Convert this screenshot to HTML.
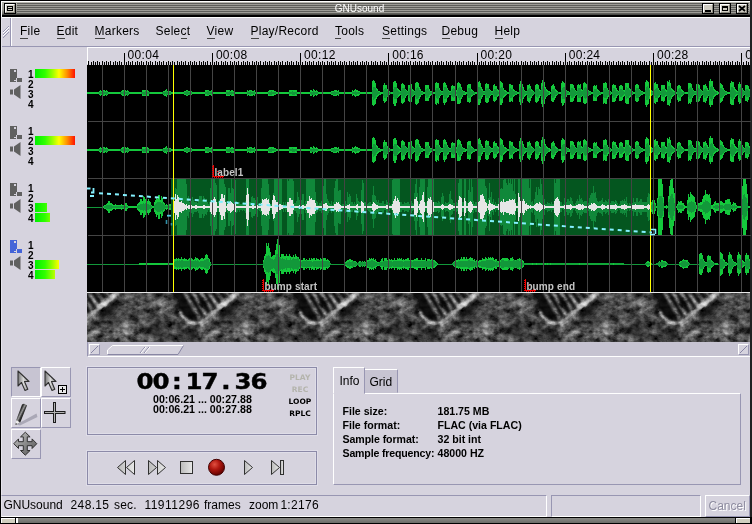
<!DOCTYPE html>
<html><head><meta charset="utf-8"><title>GNUsound</title>
<style>
html,body{margin:0;padding:0}
body{width:752px;height:524px;position:relative;overflow:hidden;background:#d6d3de;font-family:"Liberation Sans",sans-serif;font-size:12px;color:#000}
div,span,svg{position:absolute;box-sizing:border-box}
.t{white-space:pre;line-height:1}
.m{top:24px;font-size:12px;white-space:pre;line-height:14px;height:14px;letter-spacing:.25px}
.m u{text-decoration:none;border-bottom:1px solid #444;padding-bottom:0px}
.b{font-weight:bold;font-size:10px;line-height:10px;white-space:pre}
.etch{border:1px solid #8c8aa8;box-shadow:0 0 0 1px #dfdde8, inset 0 0 0 1px #dfdde8}
.btn{border:1px solid;border-color:#fff #9896b2 #9896b2 #fff;background:#d6d3de}
.btn.on{border-color:#9896b2 #fff #fff #9896b2;background:#c7c4d2}
.in{border:1px solid;border-color:#9896b2 #fff #fff #9896b2}
.lbl{font-weight:bold;font-size:10px;line-height:10px;color:#c4c4c4;white-space:pre}
.num{font-weight:bold;font-size:10px;line-height:10px;left:28px}
</style></head><body>

<div style="left:0;top:0;width:752px;height:17px;background:#000"></div>
<div style="left:1px;top:1px;width:749px;height:1px;background:#fff"></div>
<div style="left:1px;top:2px;width:1px;height:15px;background:#fff"></div>
<div style="left:1px;top:17px;width:1px;height:500px;background:#e6e4ec"></div>
<div style="left:0;top:0;width:1px;height:524px;background:#000"></div>
<div style="left:750px;top:0;width:2px;height:524px;background:#222"></div>
<div style="left:2px;top:2px;width:748px;height:13px;background:linear-gradient(#b9b8b0,#a09f98 60%,#5a5a56)"></div>
<div style="left:17px;top:3px;width:732px;height:11px;background:repeating-linear-gradient(#5e5e5a 0,#5e5e5a 1px,#9d9c96 1px,#9d9c96 2px)"></div>
<div style="left:2px;top:14px;width:748px;height:1px;background:#4a4a46"></div>
<div class="t" style="left:0;top:4px;width:719px;text-align:center;font-size:10px;line-height:10px;color:#fff">GNUsound</div>
<div style="left:4px;top:3px;width:12px;height:11px;background:#000"></div>
<div style="left:5px;top:4px;width:10px;height:9px;background:#d0cdc2;border:1px solid;border-color:#fff #8a887e #8a887e #fff"></div>
<div style="left:7px;top:6px;width:6px;height:5px;border:1px solid #000;background:#d0cdc2"></div><div style="left:8px;top:8px;width:4px;height:1px;background:#000"></div>
<div style="left:702px;top:3px;width:12px;height:11px;background:#000"></div>
<div style="left:703px;top:4px;width:10px;height:9px;background:#d0cdc2;border:1px solid;border-color:#fff #8a887e #8a887e #fff"></div>
<div style="left:705px;top:10px;width:6px;height:2px;background:#000"></div>
<div style="left:719px;top:3px;width:12px;height:11px;background:#000"></div>
<div style="left:720px;top:4px;width:10px;height:9px;background:#d0cdc2;border:1px solid;border-color:#fff #8a887e #8a887e #fff"></div>
<div style="left:722px;top:6px;width:6px;height:5px;border:1px solid #000;border-top-width:2px"></div>
<div style="left:736px;top:3px;width:12px;height:11px;background:#000"></div>
<div style="left:737px;top:4px;width:10px;height:9px;background:#d0cdc2;border:1px solid;border-color:#fff #8a887e #8a887e #fff"></div>
<svg style="left:738px;top:5px" width="8" height="7" viewBox="0 0 8 7"><path d="M1 1L7 6M7 1L1 6" stroke="#000" stroke-width="1.8" fill="none"/></svg>
<div style="left:2px;top:17px;width:748px;height:30px;background:#d6d3de"></div>
<div style="left:2px;top:17px;width:748px;height:1px;background:#fff"></div>
<div style="left:2px;top:46px;width:748px;height:1px;background:#9896b2"></div>
<div style="left:10px;top:18px;width:1px;height:28px;background:#9896b2"></div>
<div style="left:11px;top:18px;width:1px;height:28px;background:#fff"></div>
<svg style="left:3px;top:26px" width="7" height="12" viewBox="0 0 7 12"><path d="M0 6L6 0M0 9L6 3M0 12L6 6" stroke="#9896b2" stroke-width="1" fill="none"/><path d="M0 7L6 1M0 10L6 4" stroke="#fff" stroke-width="1" fill="none"/></svg>
<span class="m" style="left:20px"><u>F</u>ile</span>
<span class="m" style="left:56.5px"><u>E</u>dit</span>
<span class="m" style="left:94.5px"><u>M</u>arkers</span>
<span class="m" style="left:155.5px">Sele<u>c</u>t</span>
<span class="m" style="left:206.5px"><u>V</u>iew</span>
<span class="m" style="left:250.5px"><u>P</u>lay/Record</span>
<span class="m" style="left:335px"><u>T</u>ools</span>
<span class="m" style="left:382px"><u>S</u>ettings</span>
<span class="m" style="left:441.5px"><u>D</u>ebug</span>
<span class="m" style="left:494.5px"><u>H</u>elp</span>
<div style="left:87px;top:47px;width:663px;height:1px;background:#fff"></div>
<div style="left:87px;top:47px;width:1px;height:17px;background:#fff"></div>
<svg style="left:0;top:47px" width="752" height="18" viewBox="0 47 752 18" shape-rendering="crispEdges"><path d="M88 61v4M91 62v3M93 61v4M95 62v3M97 61v4M99 62v3M102 61v4M104 62v3M106 61v4M108 62v3M110 61v4M113 62v3M115 61v4M117 62v3M119 61v4M121 62v3M124 61v4M126 62v3M128 61v4M130 62v3M132 61v4M135 62v3M137 61v4M139 62v3M141 61v4M143 62v3M146 61v4M148 62v3M150 61v4M152 62v3M155 61v4M157 62v3M159 61v4M161 62v3M163 61v4M166 62v3M168 61v4M170 62v3M172 61v4M174 62v3M177 61v4M179 62v3M181 61v4M183 62v3M185 61v4M188 62v3M190 61v4M192 62v3M194 61v4M196 62v3M199 61v4M201 62v3M203 61v4M205 62v3M207 61v4M210 62v3M212 61v4M214 62v3M216 61v4M218 62v3M221 61v4M223 62v3M225 61v4M227 62v3M230 61v4M232 62v3M234 61v4M236 62v3M238 61v4M241 62v3M243 61v4M245 62v3M247 61v4M249 62v3M252 61v4M254 62v3M256 61v4M258 62v3M260 61v4M263 62v3M265 61v4M267 62v3M269 61v4M271 62v3M274 61v4M276 62v3M278 61v4M280 62v3M282 61v4M285 62v3M287 61v4M289 62v3M291 61v4M293 62v3M296 61v4M298 62v3M300 61v4M302 62v3M305 61v4M307 62v3M309 61v4M311 62v3M313 61v4M316 62v3M318 61v4M320 62v3M322 61v4M324 62v3M327 61v4M329 62v3M331 61v4M333 62v3M335 61v4M338 62v3M340 61v4M342 62v3M344 61v4M346 62v3M349 61v4M351 62v3M353 61v4M355 62v3M357 61v4M360 62v3M362 61v4M364 62v3M366 61v4M368 62v3M371 61v4M373 62v3M375 61v4M377 62v3M380 61v4M382 62v3M384 61v4M386 62v3M388 61v4M391 62v3M393 61v4M395 62v3M397 61v4M399 62v3M402 61v4M404 62v3M406 61v4M408 62v3M410 61v4M413 62v3M415 61v4M417 62v3M419 61v4M421 62v3M424 61v4M426 62v3M428 61v4M430 62v3M432 61v4M435 62v3M437 61v4M439 62v3M441 61v4M443 62v3M446 61v4M448 62v3M450 61v4M452 62v3M455 61v4M457 62v3M459 61v4M461 62v3M463 61v4M466 62v3M468 61v4M470 62v3M472 61v4M474 62v3M477 61v4M479 62v3M481 61v4M483 62v3M485 61v4M488 62v3M490 61v4M492 62v3M494 61v4M496 62v3M499 61v4M501 62v3M503 61v4M505 62v3M507 61v4M510 62v3M512 61v4M514 62v3M516 61v4M518 62v3M521 61v4M523 62v3M525 61v4M527 62v3M530 61v4M532 62v3M534 61v4M536 62v3M538 61v4M541 62v3M543 61v4M545 62v3M547 61v4M549 62v3M552 61v4M554 62v3M556 61v4M558 62v3M560 61v4M563 62v3M565 61v4M567 62v3M569 61v4M571 62v3M574 61v4M576 62v3M578 61v4M580 62v3M582 61v4M585 62v3M587 61v4M589 62v3M591 61v4M593 62v3M596 61v4M598 62v3M600 61v4M602 62v3M605 61v4M607 62v3M609 61v4M611 62v3M613 61v4M616 62v3M618 61v4M620 62v3M622 61v4M624 62v3M627 61v4M629 62v3M631 61v4M633 62v3M635 61v4M638 62v3M640 61v4M642 62v3M644 61v4M646 62v3M649 61v4M651 62v3M653 61v4M655 62v3M657 61v4M660 62v3M662 61v4M664 62v3M666 61v4M668 62v3M671 61v4M673 62v3M675 61v4M677 62v3M680 61v4M682 62v3M684 61v4M686 62v3M688 61v4M691 62v3M693 61v4M695 62v3M697 61v4M699 62v3M702 61v4M704 62v3M706 61v4M708 62v3M710 61v4M713 62v3M715 61v4M717 62v3M719 61v4M721 62v3M724 61v4M726 62v3M728 61v4M730 62v3M732 61v4M735 62v3M737 61v4M739 62v3M741 61v4M743 62v3M746 61v4M748 62v3" stroke="#000" stroke-width="1" fill="none" transform="translate(.5 0)"/><path d="M124 53v12M212 53v12M300 53v12M388 53v12M477 53v12M565 53v12M653 53v12M741 53v12" stroke="#000" stroke-width="1" fill="none" transform="translate(.5 0)"/></svg>
<span class="t" style="left:127.6px;top:49px;font-size:12px;line-height:12px;letter-spacing:.3px;width:40px;overflow:hidden">00:04</span>
<span class="t" style="left:215.9px;top:49px;font-size:12px;line-height:12px;letter-spacing:.3px;width:40px;overflow:hidden">00:08</span>
<span class="t" style="left:304.1px;top:49px;font-size:12px;line-height:12px;letter-spacing:.3px;width:40px;overflow:hidden">00:12</span>
<span class="t" style="left:392.3px;top:49px;font-size:12px;line-height:12px;letter-spacing:.3px;width:40px;overflow:hidden">00:16</span>
<span class="t" style="left:480.6px;top:49px;font-size:12px;line-height:12px;letter-spacing:.3px;width:40px;overflow:hidden">00:20</span>
<span class="t" style="left:568.8px;top:49px;font-size:12px;line-height:12px;letter-spacing:.3px;width:40px;overflow:hidden">00:24</span>
<span class="t" style="left:657.0px;top:49px;font-size:12px;line-height:12px;letter-spacing:.3px;width:40px;overflow:hidden">00:28</span>
<span class="t" style="left:745.3px;top:49px;font-size:12px;line-height:12px;letter-spacing:.3px;width:5px;overflow:hidden">00:32</span>
<svg style="left:0;top:65px" width="752" height="229" viewBox="0 65 752 229" shape-rendering="crispEdges"><rect x="87" y="65" width="663" height="228" fill="#000"/><rect x="171" y="179" width="480" height="56" fill="#04561f"/><rect x="87" y="92" width="663" height="2" fill="#14c83c"/><path d="M99 91V95M100 90V96M101 91V95M102 90V96M103 90V96M104 90V96M105 91V95M106 90V96M107 91V95M120 92V94M121 91V95M122 90V96M123 90V96M124 90V96M125 90V96M126 91V95M127 90V96M128 91V95M141 92V94M142 90V96M143 90V96M144 90V96M145 90V96M146 90V96M147 90V96M148 91V96M149 92V94M162 92V94M163 91V95M164 91V96M165 90V96M166 89V97M167 91V95M168 90V96M169 91V95M170 91V95M183 92V94M184 91V95M185 91V95M186 90V96M187 90V96M188 91V95M189 91V95M190 90V96M191 91V95M204 92V94M205 90V96M206 90V96M207 90V96M208 90V96M209 91V95M210 91V95M211 90V96M212 91V95M225 92V94M226 90V96M227 90V96M228 90V96M229 90V96M230 91V95M231 90V96M232 90V96M233 91V96M246 93V93M247 90V96M248 91V95M249 90V96M250 90V96M251 90V96M252 91V96M253 91V95M254 90V96M268 91V96M269 90V96M270 90V96M271 90V96M272 90V96M273 90V96M274 91V95M275 91V95M289 90V96M290 90V96M291 90V96M292 90V96M293 90V96M294 90V96M295 90V96M296 90V96M310 90V96M311 90V96M312 91V95M313 89V97M314 90V96M315 91V95M316 90V96M317 91V95M331 91V95M332 91V95M333 91V96M334 90V96M335 90V96M336 90V96M337 91V95M338 90V96M352 90V96M353 91V95M354 90V96M355 89V97M356 90V96M357 90V96M358 91V96M359 91V95M372 81V105M373 80V106M374 81V105M375 83V104M376 88V99M377 89V97M378 91V96M379 91V95M380 92V95M381 92V94M382 92V94M383 85V101M384 83V103M385 85V102M386 85V101M387 89V97M388 90V96M389 91V95M390 92V94M391 92V94M392 92V94M393 82V104M394 81V106M395 81V106M396 83V103M397 88V98M398 89V97M399 90V96M400 91V95M401 84V103M402 83V104M403 84V103M404 85V102M405 89V98M406 90V96M407 91V95M408 85V101M409 85V102M410 85V101M411 84V102M412 89V97M413 90V96M414 91V95M415 83V104M416 82V105M417 82V104M418 83V103M419 87V99M420 89V97M421 91V95M422 91V95M423 92V94M424 92V94M425 85V101M426 85V101M427 85V101M428 85V101M429 89V98M430 91V96M431 91V95M432 92V94M433 92V94M434 92V94M435 83V104M436 82V105M437 83V103M438 83V104M439 88V98M440 90V96M441 91V95M442 91V95M443 83V103M444 82V105M445 83V103M446 85V102M447 88V98M448 90V97M449 91V95M450 91V95M451 86V101M452 85V101M453 86V101M454 86V101M455 89V97M456 90V96M457 83V104M458 82V104M459 83V104M460 84V103M461 87V99M462 90V97M463 91V95M464 91V95M465 92V95M466 92V94M467 85V102M468 84V102M469 84V103M470 84V102M471 89V97M472 90V96M473 91V95M474 92V95M475 92V94M476 92V94M477 83V104M478 82V105M479 81V105M480 83V103M481 87V99M482 89V97M483 91V95M484 91V95M485 84V102M486 83V103M487 84V103M488 84V102M489 89V98M490 90V96M491 91V95M492 91V95M493 85V101M494 84V102M495 86V101M496 86V100M497 89V97M498 90V96M499 84V103M500 81V105M501 82V105M502 83V103M503 88V98M504 90V97M505 90V96M506 91V95M507 92V94M508 92V94M509 84V102M510 84V102M511 85V101M512 85V102M513 89V97M514 90V96M515 91V95M516 91V95M517 92V94M518 92V94M519 84V102M520 81V105M521 82V105M522 84V103M523 87V99M524 90V97M525 91V96M526 91V95M527 85V101M528 85V102M529 84V103M530 86V101M531 89V98M532 90V96M533 91V95M534 92V94M535 85V102M536 84V103M537 84V102M538 85V101M539 89V98M540 90V96M541 83V104M542 80V107M543 80V107M544 82V104M545 87V99M546 89V97M547 90V96M548 91V95M549 91V95M550 92V94M551 86V101M552 85V102M553 84V102M554 86V100M555 89V98M556 90V96M557 91V95M558 92V94M559 92V94M560 92V94M561 83V103M562 81V106M563 82V105M564 83V103M565 87V99M566 90V97M567 91V95M568 91V95M569 92V95M570 84V102M571 84V102M572 84V102M573 85V101M574 88V98M575 90V96M576 91V95M577 85V102M578 84V102M579 85V102M580 84V102M581 89V97M582 90V96M583 83V103M584 82V104M585 83V104M586 84V103M587 88V98M588 90V96M589 91V95M590 91V95M591 92V94M592 92V94M593 86V101M594 85V101M595 86V101M596 85V101M597 89V97M598 90V96M599 91V95M600 92V95M601 92V94M602 92V94M603 83V104M604 83V103M605 82V104M606 83V104M607 88V99M608 90V97M609 91V95M610 91V95M611 92V94M612 85V102M613 84V102M614 85V102M615 85V101M616 88V98M617 90V96M618 91V95M619 86V101M620 85V101M621 85V101M622 86V100M623 90V97M624 90V96M625 83V103M626 83V104M627 83V104M628 83V104M629 88V98M630 89V97M631 90V96M632 91V95M633 92V94M634 92V94M635 85V101M636 84V102M637 84V102M638 85V101M639 89V97M640 90V96M641 91V95M642 91V95M643 92V94M644 92V94M645 82V105M646 80V107M647 81V105M648 82V104M649 88V99M650 89V97M651 90V96M652 91V95M653 92V94M654 83V103M655 82V104M656 84V102M657 84V102M658 88V98M659 90V97M660 91V95M661 85V101M662 85V101M663 85V102M664 85V101M665 89V97M666 90V96M667 81V105M668 82V105M669 80V106M670 83V103M671 88V99M672 89V97M673 90V96M674 91V95M675 92V94M676 92V94M677 86V100M678 85V102M679 85V101M680 86V101M681 89V97M682 90V96M683 91V95M684 92V94M685 92V94M686 92V94M687 92V94M688 83V104M689 83V103M690 83V104M691 84V102M692 88V98M693 90V96M694 91V95M695 91V95M696 84V102M697 83V103M698 84V102M699 85V101M700 89V98M701 90V96M702 91V95M703 85V102M704 85V102M705 84V103M706 86V101M707 88V98M708 90V96M709 81V105M710 79V107M711 81V105M712 81V105M713 87V99M714 89V97M715 90V96M716 91V95M717 91V95M718 92V94M719 85V102M720 83V103M721 84V102M722 85V101M723 88V98M724 90V96M725 91V95M726 91V95M727 92V94M728 92V94M729 92V94M730 83V104M731 81V105M732 82V105M733 82V105M734 87V99M735 89V97M736 90V96M737 91V95M738 84V102M739 82V104M740 84V103M741 85V102M742 88V98M743 90V96M744 91V95M745 85V101M746 85V101M747 85V102M748 86V100M749 89V97" stroke="#14c83c" stroke-width="1" fill="none" transform="translate(.5 0)"/><path d="M99 92V94M100 92V94M101 92V94M102 92V95M103 91V95M104 92V94M105 92V94M106 92V95M107 92V94M120 92V94M121 92V94M122 92V94M123 91V95M124 91V95M125 92V94M126 92V94M127 92V95M128 92V94M141 92V94M142 92V94M143 92V95M144 92V95M145 91V95M146 92V95M147 92V94M148 92V94M149 92V94M162 92V94M163 92V94M164 92V95M165 92V94M166 91V95M167 92V94M168 92V94M169 92V94M170 92V94M183 93V93M184 92V94M185 92V94M186 91V95M187 91V95M188 92V94M189 92V95M190 92V94M191 92V94M204 93V93M205 92V94M206 92V94M207 91V95M208 91V95M209 92V94M210 92V94M211 92V94M212 92V94M226 92V94M227 92V95M228 92V95M229 91V95M230 92V94M231 92V95M232 92V94M233 92V94M247 92V94M248 92V94M249 92V94M250 91V95M251 92V94M252 92V94M253 92V94M254 92V94M268 92V94M269 92V95M270 92V95M271 91V95M272 92V94M273 92V94M274 92V94M275 92V94M289 92V94M290 92V94M291 92V94M292 91V95M293 92V95M294 92V95M295 92V94M296 92V95M310 92V94M311 92V95M312 92V95M313 91V95M314 92V95M315 92V94M316 92V94M317 92V94M331 92V94M332 92V94M333 92V95M334 91V95M335 92V95M336 92V94M337 92V94M338 92V94M352 92V94M353 92V94M354 92V94M355 91V95M356 92V95M357 92V94M358 92V94M359 92V94M372 90V97M373 87V100M374 87V99M375 88V98M376 90V96M377 91V95M378 92V94M379 92V94M383 90V96M384 89V98M385 88V98M386 89V97M387 91V96M388 91V95M389 92V94M390 92V94M393 89V97M394 87V99M395 87V99M396 87V99M397 90V97M398 91V95M399 92V94M400 92V94M401 90V96M402 88V99M403 88V98M404 88V98M405 90V96M406 91V95M407 92V94M408 91V96M409 88V98M410 88V98M411 89V97M412 91V96M413 91V95M414 92V94M415 90V97M416 88V99M417 87V99M418 88V98M419 90V96M420 91V95M421 92V94M422 92V94M425 90V96M426 89V98M427 88V98M428 89V97M429 91V95M430 92V94M431 92V94M432 92V94M435 90V96M436 88V98M437 88V99M438 88V98M439 90V96M440 91V95M441 92V94M442 92V94M443 90V96M444 87V99M445 87V99M446 88V98M447 90V96M448 91V95M449 92V94M450 92V94M451 91V96M452 89V97M453 88V98M454 89V97M455 90V96M456 92V94M457 90V96M458 88V98M459 87V100M460 88V98M461 90V97M462 91V95M463 92V94M464 92V94M467 91V96M468 88V98M469 88V98M470 89V97M471 91V95M472 91V95M473 92V94M474 92V94M477 90V96M478 87V99M479 87V99M480 88V99M481 90V96M482 91V95M483 92V94M484 92V94M485 90V96M486 88V98M487 88V98M488 88V98M489 90V96M490 91V95M491 92V94M492 92V94M493 91V95M494 89V97M495 89V97M496 89V97M497 91V95M498 92V94M499 89V97M500 88V98M501 87V99M502 88V98M503 90V96M504 91V95M505 92V94M506 92V94M509 91V96M510 88V98M511 89V98M512 89V97M513 91V95M514 91V95M515 92V94M516 92V94M519 90V97M520 87V99M521 88V98M522 88V98M523 90V97M524 91V95M525 92V94M526 92V94M527 90V96M528 89V98M529 88V98M530 89V97M531 91V96M532 91V95M533 92V94M534 92V94M535 90V96M536 89V97M537 89V98M538 89V97M539 91V95M540 91V95M541 89V97M542 86V100M543 87V99M544 88V99M545 89V97M546 91V96M547 92V95M548 92V94M551 91V96M552 89V98M553 89V98M554 89V97M555 91V95M556 92V95M557 92V94M558 92V94M561 90V96M562 88V99M563 87V99M564 87V99M565 90V96M566 91V95M567 92V94M568 92V94M570 90V96M571 88V98M572 88V98M573 89V97M574 90V96M575 91V95M576 92V94M577 90V96M578 88V98M579 88V98M580 88V98M581 91V96M582 91V95M583 90V96M584 88V98M585 87V99M586 88V98M587 90V96M588 91V95M589 92V94M590 92V94M593 91V96M594 89V97M595 89V98M596 89V97M597 91V95M598 91V95M599 92V94M600 92V94M603 90V97M604 88V98M605 88V98M606 88V98M607 90V96M608 91V95M609 92V94M610 92V94M612 91V96M613 88V98M614 88V98M615 89V97M616 91V95M617 91V95M618 92V94M619 91V95M620 89V97M621 89V97M622 90V96M623 91V95M624 92V94M625 90V96M626 87V99M627 88V98M628 88V98M629 90V96M630 91V95M631 92V94M632 92V94M635 90V96M636 88V98M637 88V98M638 88V98M639 90V96M640 91V95M641 92V94M642 92V94M645 90V96M646 87V100M647 86V100M648 88V99M649 90V96M650 91V95M651 92V94M652 92V94M654 90V96M655 89V98M656 88V98M657 88V98M658 90V96M659 91V95M660 92V94M661 90V96M662 89V97M663 89V97M664 89V97M665 91V95M666 92V95M667 89V97M668 86V100M669 86V100M670 88V99M671 90V96M672 91V95M673 92V95M674 92V94M677 91V95M678 89V97M679 88V98M680 89V97M681 91V95M682 92V95M683 92V94M684 92V94M688 89V97M689 88V99M690 87V99M691 88V98M692 90V96M693 91V95M694 92V94M695 92V94M696 90V96M697 88V99M698 88V99M699 89V97M700 90V96M701 91V95M702 92V94M703 90V96M704 89V98M705 88V98M706 89V97M707 91V96M708 91V95M709 90V97M710 87V99M711 86V101M712 87V99M713 90V96M714 91V95M715 92V94M716 92V94M719 90V96M720 88V98M721 88V98M722 89V97M723 90V96M724 91V95M725 92V94M726 92V94M730 90V97M731 87V99M732 87V100M733 88V98M734 90V97M735 91V95M736 92V94M737 92V94M738 90V96M739 88V98M740 87V99M741 88V98M742 90V96M743 91V95M744 92V94M745 90V96M746 89V97M747 89V97M748 90V97M749 91V96" stroke="#12983a" stroke-width="1" fill="none" transform="translate(.5 0)"/><rect x="87" y="149" width="663" height="2" fill="#14c83c"/><path d="M99 148V152M100 147V153M101 148V152M102 147V153M103 147V153M104 147V153M105 148V152M106 147V153M107 148V152M120 149V151M121 148V152M122 147V153M123 147V153M124 147V153M125 147V153M126 148V152M127 147V153M128 148V152M141 149V151M142 147V153M143 147V153M144 147V153M145 147V153M146 147V153M147 147V153M148 148V153M149 149V151M162 149V151M163 148V152M164 148V153M165 147V153M166 146V154M167 148V152M168 147V153M169 148V152M170 148V152M183 149V151M184 148V152M185 148V152M186 147V153M187 147V153M188 148V152M189 148V152M190 147V153M191 148V152M204 149V151M205 147V153M206 147V153M207 147V153M208 147V153M209 148V152M210 148V152M211 147V153M212 148V152M225 149V151M226 147V153M227 147V153M228 147V153M229 147V153M230 148V152M231 147V153M232 147V153M233 148V153M246 150V150M247 147V153M248 148V152M249 147V153M250 147V153M251 147V153M252 148V153M253 148V152M254 147V153M268 148V153M269 147V153M270 147V153M271 147V153M272 147V153M273 147V153M274 148V152M275 148V152M289 147V153M290 147V153M291 147V153M292 147V153M293 147V153M294 147V153M295 147V153M296 147V153M310 147V153M311 147V153M312 148V152M313 146V154M314 147V153M315 148V152M316 147V153M317 148V152M331 148V152M332 148V152M333 148V153M334 147V153M335 147V153M336 147V153M337 148V152M338 147V153M352 147V153M353 148V152M354 147V153M355 146V154M356 147V153M357 147V153M358 148V153M359 148V152M372 138V162M373 137V163M374 138V162M375 140V161M376 145V156M377 146V154M378 148V153M379 148V152M380 149V152M381 149V151M382 149V151M383 142V158M384 140V160M385 142V159M386 142V158M387 146V154M388 147V153M389 148V152M390 149V151M391 149V151M392 149V151M393 139V161M394 138V163M395 138V163M396 140V160M397 145V155M398 146V154M399 147V153M400 148V152M401 141V160M402 140V161M403 141V160M404 142V159M405 146V155M406 147V153M407 148V152M408 142V158M409 142V159M410 142V158M411 141V159M412 146V154M413 147V153M414 148V152M415 140V161M416 139V162M417 139V161M418 140V160M419 144V156M420 146V154M421 148V152M422 148V152M423 149V151M424 149V151M425 142V158M426 142V158M427 142V158M428 142V158M429 146V155M430 148V153M431 148V152M432 149V151M433 149V151M434 149V151M435 140V161M436 139V162M437 140V160M438 140V161M439 145V155M440 147V153M441 148V152M442 148V152M443 140V160M444 139V162M445 140V160M446 142V159M447 145V155M448 147V154M449 148V152M450 148V152M451 143V158M452 142V158M453 143V158M454 143V158M455 146V154M456 147V153M457 140V161M458 139V161M459 140V161M460 141V160M461 144V156M462 147V154M463 148V152M464 148V152M465 149V152M466 149V151M467 142V159M468 141V159M469 141V160M470 141V159M471 146V154M472 147V153M473 148V152M474 149V152M475 149V151M476 149V151M477 140V161M478 139V162M479 138V162M480 140V160M481 144V156M482 146V154M483 148V152M484 148V152M485 141V159M486 140V160M487 141V160M488 141V159M489 146V155M490 147V153M491 148V152M492 148V152M493 142V158M494 141V159M495 143V158M496 143V157M497 146V154M498 147V153M499 141V160M500 138V162M501 139V162M502 140V160M503 145V155M504 147V154M505 147V153M506 148V152M507 149V151M508 149V151M509 141V159M510 141V159M511 142V158M512 142V159M513 146V154M514 147V153M515 148V152M516 148V152M517 149V151M518 149V151M519 141V159M520 138V162M521 139V162M522 141V160M523 144V156M524 147V154M525 148V153M526 148V152M527 142V158M528 142V159M529 141V160M530 143V158M531 146V155M532 147V153M533 148V152M534 149V151M535 142V159M536 141V160M537 141V159M538 142V158M539 146V155M540 147V153M541 140V161M542 137V164M543 137V164M544 139V161M545 144V156M546 146V154M547 147V153M548 148V152M549 148V152M550 149V151M551 143V158M552 142V159M553 141V159M554 143V157M555 146V155M556 147V153M557 148V152M558 149V151M559 149V151M560 149V151M561 140V160M562 138V163M563 139V162M564 140V160M565 144V156M566 147V154M567 148V152M568 148V152M569 149V152M570 141V159M571 141V159M572 141V159M573 142V158M574 145V155M575 147V153M576 148V152M577 142V159M578 141V159M579 142V159M580 141V159M581 146V154M582 147V153M583 140V160M584 139V161M585 140V161M586 141V160M587 145V155M588 147V153M589 148V152M590 148V152M591 149V151M592 149V151M593 143V158M594 142V158M595 143V158M596 142V158M597 146V154M598 147V153M599 148V152M600 149V152M601 149V151M602 149V151M603 140V161M604 140V160M605 139V161M606 140V161M607 145V156M608 147V154M609 148V152M610 148V152M611 149V151M612 142V159M613 141V159M614 142V159M615 142V158M616 145V155M617 147V153M618 148V152M619 143V158M620 142V158M621 142V158M622 143V157M623 147V154M624 147V153M625 140V160M626 140V161M627 140V161M628 140V161M629 145V155M630 146V154M631 147V153M632 148V152M633 149V151M634 149V151M635 142V158M636 141V159M637 141V159M638 142V158M639 146V154M640 147V153M641 148V152M642 148V152M643 149V151M644 149V151M645 139V162M646 137V164M647 138V162M648 139V161M649 145V156M650 146V154M651 147V153M652 148V152M653 149V151M654 140V160M655 139V161M656 141V159M657 141V159M658 145V155M659 147V154M660 148V152M661 142V158M662 142V158M663 142V159M664 142V158M665 146V154M666 147V153M667 138V162M668 139V162M669 137V163M670 140V160M671 145V156M672 146V154M673 147V153M674 148V152M675 149V151M676 149V151M677 143V157M678 142V159M679 142V158M680 143V158M681 146V154M682 147V153M683 148V152M684 149V151M685 149V151M686 149V151M687 149V151M688 140V161M689 140V160M690 140V161M691 141V159M692 145V155M693 147V153M694 148V152M695 148V152M696 141V159M697 140V160M698 141V159M699 142V158M700 146V155M701 147V153M702 148V152M703 142V159M704 142V159M705 141V160M706 143V158M707 145V155M708 147V153M709 138V162M710 136V164M711 138V162M712 138V162M713 144V156M714 146V154M715 147V153M716 148V152M717 148V152M718 149V151M719 142V159M720 140V160M721 141V159M722 142V158M723 145V155M724 147V153M725 148V152M726 148V152M727 149V151M728 149V151M729 149V151M730 140V161M731 138V162M732 139V162M733 139V162M734 144V156M735 146V154M736 147V153M737 148V152M738 141V159M739 139V161M740 141V160M741 142V159M742 145V155M743 147V153M744 148V152M745 142V158M746 142V158M747 142V159M748 143V157M749 146V154" stroke="#14c83c" stroke-width="1" fill="none" transform="translate(.5 0)"/><path d="M99 149V151M100 149V151M101 149V151M102 149V152M103 148V152M104 149V151M105 149V151M106 149V152M107 149V151M120 149V151M121 149V151M122 149V151M123 148V152M124 148V152M125 149V151M126 149V151M127 149V152M128 149V151M141 149V151M142 149V151M143 149V152M144 149V152M145 148V152M146 149V152M147 149V151M148 149V151M149 149V151M162 149V151M163 149V151M164 149V152M165 149V151M166 148V152M167 149V151M168 149V151M169 149V151M170 149V151M183 150V150M184 149V151M185 149V151M186 148V152M187 148V152M188 149V151M189 149V152M190 149V151M191 149V151M204 150V150M205 149V151M206 149V151M207 148V152M208 148V152M209 149V151M210 149V151M211 149V151M212 149V151M226 149V151M227 149V152M228 149V152M229 148V152M230 149V151M231 149V152M232 149V151M233 149V151M247 149V151M248 149V151M249 149V151M250 148V152M251 149V151M252 149V151M253 149V151M254 149V151M268 149V151M269 149V152M270 149V152M271 148V152M272 149V151M273 149V151M274 149V151M275 149V151M289 149V151M290 149V151M291 149V151M292 148V152M293 149V152M294 149V152M295 149V151M296 149V152M310 149V151M311 149V152M312 149V152M313 148V152M314 149V152M315 149V151M316 149V151M317 149V151M331 149V151M332 149V151M333 149V152M334 148V152M335 149V152M336 149V151M337 149V151M338 149V151M352 149V151M353 149V151M354 149V151M355 148V152M356 149V152M357 149V151M358 149V151M359 149V151M372 147V154M373 144V157M374 144V156M375 145V155M376 147V153M377 148V152M378 149V151M379 149V151M383 147V153M384 146V155M385 145V155M386 146V154M387 148V153M388 148V152M389 149V151M390 149V151M393 146V154M394 144V156M395 144V156M396 144V156M397 147V154M398 148V152M399 149V151M400 149V151M401 147V153M402 145V156M403 145V155M404 145V155M405 147V153M406 148V152M407 149V151M408 148V153M409 145V155M410 145V155M411 146V154M412 148V153M413 148V152M414 149V151M415 147V154M416 145V156M417 144V156M418 145V155M419 147V153M420 148V152M421 149V151M422 149V151M425 147V153M426 146V155M427 145V155M428 146V154M429 148V152M430 149V151M431 149V151M432 149V151M435 147V153M436 145V155M437 145V156M438 145V155M439 147V153M440 148V152M441 149V151M442 149V151M443 147V153M444 144V156M445 144V156M446 145V155M447 147V153M448 148V152M449 149V151M450 149V151M451 148V153M452 146V154M453 145V155M454 146V154M455 147V153M456 149V151M457 147V153M458 145V155M459 144V157M460 145V155M461 147V154M462 148V152M463 149V151M464 149V151M467 148V153M468 145V155M469 145V155M470 146V154M471 148V152M472 148V152M473 149V151M474 149V151M477 147V153M478 144V156M479 144V156M480 145V156M481 147V153M482 148V152M483 149V151M484 149V151M485 147V153M486 145V155M487 145V155M488 145V155M489 147V153M490 148V152M491 149V151M492 149V151M493 148V152M494 146V154M495 146V154M496 146V154M497 148V152M498 149V151M499 146V154M500 145V155M501 144V156M502 145V155M503 147V153M504 148V152M505 149V151M506 149V151M509 148V153M510 145V155M511 146V155M512 146V154M513 148V152M514 148V152M515 149V151M516 149V151M519 147V154M520 144V156M521 145V155M522 145V155M523 147V154M524 148V152M525 149V151M526 149V151M527 147V153M528 146V155M529 145V155M530 146V154M531 148V153M532 148V152M533 149V151M534 149V151M535 147V153M536 146V154M537 146V155M538 146V154M539 148V152M540 148V152M541 146V154M542 143V157M543 144V156M544 145V156M545 146V154M546 148V153M547 149V152M548 149V151M551 148V153M552 146V155M553 146V155M554 146V154M555 148V152M556 149V152M557 149V151M558 149V151M561 147V153M562 145V156M563 144V156M564 144V156M565 147V153M566 148V152M567 149V151M568 149V151M570 147V153M571 145V155M572 145V155M573 146V154M574 147V153M575 148V152M576 149V151M577 147V153M578 145V155M579 145V155M580 145V155M581 148V153M582 148V152M583 147V153M584 145V155M585 144V156M586 145V155M587 147V153M588 148V152M589 149V151M590 149V151M593 148V153M594 146V154M595 146V155M596 146V154M597 148V152M598 148V152M599 149V151M600 149V151M603 147V154M604 145V155M605 145V155M606 145V155M607 147V153M608 148V152M609 149V151M610 149V151M612 148V153M613 145V155M614 145V155M615 146V154M616 148V152M617 148V152M618 149V151M619 148V152M620 146V154M621 146V154M622 147V153M623 148V152M624 149V151M625 147V153M626 144V156M627 145V155M628 145V155M629 147V153M630 148V152M631 149V151M632 149V151M635 147V153M636 145V155M637 145V155M638 145V155M639 147V153M640 148V152M641 149V151M642 149V151M645 147V153M646 144V157M647 143V157M648 145V156M649 147V153M650 148V152M651 149V151M652 149V151M654 147V153M655 146V155M656 145V155M657 145V155M658 147V153M659 148V152M660 149V151M661 147V153M662 146V154M663 146V154M664 146V154M665 148V152M666 149V152M667 146V154M668 143V157M669 143V157M670 145V156M671 147V153M672 148V152M673 149V152M674 149V151M677 148V152M678 146V154M679 145V155M680 146V154M681 148V152M682 149V152M683 149V151M684 149V151M688 146V154M689 145V156M690 144V156M691 145V155M692 147V153M693 148V152M694 149V151M695 149V151M696 147V153M697 145V156M698 145V156M699 146V154M700 147V153M701 148V152M702 149V151M703 147V153M704 146V155M705 145V155M706 146V154M707 148V153M708 148V152M709 147V154M710 144V156M711 143V158M712 144V156M713 147V153M714 148V152M715 149V151M716 149V151M719 147V153M720 145V155M721 145V155M722 146V154M723 147V153M724 148V152M725 149V151M726 149V151M730 147V154M731 144V156M732 144V157M733 145V155M734 147V154M735 148V152M736 149V151M737 149V151M738 147V153M739 145V155M740 144V156M741 145V155M742 147V153M743 148V152M744 149V151M745 147V153M746 146V154M747 146V154M748 147V154M749 148V153" stroke="#12983a" stroke-width="1" fill="none" transform="translate(.5 0)"/><rect x="87" y="207" width="84" height="1" fill="#12983a"/><path d="M103 206V208M104 205V209M105 205V209M106 204V210M107 203V211M108 201V213M109 201V213M110 203V211M111 203V211M112 204V210M113 205V209M114 205V209M115 204V210M116 205V209M117 205V209M118 205V209M119 205V209M120 205V209M121 204V210M122 205V209M123 205V209M124 204V210M125 203V211M126 203V211M127 205V209M128 206V208M129 206V208M130 206V208M131 206V208M132 206V208M133 206V208M134 206V208M135 206V208M136 206V208M137 204V210M138 203V211M139 202V212M140 199V215M141 199V215M142 201V213M143 196V218M144 197V217M145 199V215M146 198V216M147 201V213M148 199V215M149 201V213M150 202V212M151 205V209M152 206V208M153 206V208M154 202V212M155 200V214M156 197V217M157 199V215M158 195V219M159 195V219M160 200V214M161 196V218M162 198V216M163 202V212M164 203V211M165 205V209M166 204V210M167 205V209M168 204V210M169 204V210M170 204V210" stroke="#14c83c" stroke-width="1" fill="none" transform="translate(.5 0)"/><path d="M104 206V208M105 206V208M106 205V209M107 205V209M108 205V209M109 205V209M110 205V209M111 205V209M112 206V208M113 206V208M114 206V208M115 206V208M116 206V208M117 206V208M118 206V208M119 206V208M120 206V208M121 206V208M122 206V208M123 206V208M124 206V208M125 206V208M126 206V208M127 206V208M137 206V208M138 205V209M139 205V209M140 204V210M141 204V210M142 204V210M143 203V211M144 204V210M145 203V211M146 203V211M147 204V210M148 204V210M149 205V209M150 205V209M151 206V208M154 205V209M155 204V210M156 203V211M157 202V212M158 202V212M159 202V212M160 202V212M161 203V211M162 202V212M163 204V210M164 205V209M165 206V208M166 206V208M167 206V208M168 206V208M169 206V208M170 206V208" stroke="#12983a" stroke-width="1" fill="none" transform="translate(.5 0)"/><path d="M173 205V209M174 204V210M175 188V226M176 189V225M177 179V235M178 179V235M179 179V235M180 179V235M181 179V235M182 179V235M183 179V235M184 179V235M185 179V235M186 184V230M187 198V216M188 196V218M189 202V212M190 196V218M191 201V213M192 197V217M193 200V214M194 202V212M195 202V212M196 202V212M197 203V211M198 201V213M199 196V218M200 196V218M201 196V218M202 200V214M203 196V218M204 198V216M205 200V214M206 199V215M207 202V212M208 204V210M209 202V212M210 188V226M211 179V235M212 179V235M213 179V235M214 179V235M215 183V231M216 185V229M217 202V212M218 202V212M219 179V235M220 179V235M221 179V235M222 179V235M223 179V235M224 184V230M225 187V227M226 203V211M227 201V213M228 188V226M229 188V226M230 193V221M231 179V235M232 188V226M233 189V225M234 179V235M235 180V234M236 201V213M237 202V212M238 204V210M239 202V212M240 204V210M241 204V210M242 203V211M243 204V210M244 203V211M245 201V213M246 179V235M247 179V235M248 179V235M249 202V212M250 202V212M251 197V217M252 196V218M253 198V216M254 198V216M255 200V214M256 198V216M257 197V217M258 204V210M259 203V211M260 202V212M261 188V226M262 179V235M263 179V235M264 179V235M265 179V235M266 179V235M267 179V235M268 184V230M269 195V219M270 204V210M271 204V210M272 204V210M273 193V221M274 179V235M275 179V235M276 179V235M277 179V235M278 179V235M279 179V235M280 179V235M281 179V235M282 205V209M283 202V212M284 205V209M285 202V212M286 204V210M287 179V235M288 181V233M289 179V235M290 179V235M291 179V235M292 179V235M293 181V233M294 203V211M295 203V211M296 201V213M297 192V222M298 197V217M299 200V214M300 200V214M301 200V214M302 194V220M303 194V220M304 204V210M305 201V213M306 179V235M307 179V235M308 179V235M309 179V235M310 179V235M311 179V235M312 179V235M313 179V235M314 179V235M315 192V222M316 201V213M317 202V212M318 205V209M319 203V211M320 203V211M321 201V213M322 199V215M323 186V228M324 179V235M325 179V235M326 194V220M327 199V215M328 201V213M329 203V211M330 204V210M331 201V213M332 205V209M333 202V212M334 188V226M335 181V233M336 179V235M337 179V235M338 191V223M339 190V224M340 190V224M341 205V209M342 204V210M343 204V210M344 201V213M345 201V213M346 204V210M347 192V222M348 197V217M349 194V220M350 196V218M351 202V212M352 202V212M353 204V210M354 202V212M355 204V210M356 194V220M357 198V216M358 201V213M359 202V212M360 202V212M361 190V224M362 180V234M363 183V231M364 202V212M365 202V212M366 204V210M367 204V210M368 203V211M369 202V212M370 202V212M371 204V210M372 195V219M373 186V228M374 195V219M375 196V218M376 200V214M377 202V212M378 200V214M379 203V211M380 203V211M381 203V211M382 201V213M383 201V213M384 204V210M385 204V210M386 200V214M387 202V212M388 204V210M389 203V211M390 205V209M391 204V210M392 180V234M393 179V235M394 179V235M395 179V235M396 179V235M397 179V235M398 179V235M399 179V235M400 202V212M401 202V212M402 204V210M403 204V210M404 202V212M405 203V211M406 203V211M407 202V212M408 202V212M409 204V210M410 204V210M411 201V213M412 203V211M413 204V210M414 193V221M415 184V230M416 179V235M417 193V221M418 202V212M419 187V227M420 179V235M421 179V235M422 179V235M423 179V235M424 179V235M425 203V211M426 202V212M427 187V227M428 179V235M429 179V235M430 179V235M431 179V235M432 182V232M433 179V235M434 202V212M435 202V212M436 202V212M437 203V211M438 201V213M439 202V212M440 204V210M441 197V217M442 193V221M443 196V218M444 204V210M445 202V212M446 203V211M447 203V211M448 202V212M449 194V220M450 191V223M451 199V215M452 200V214M453 203V211M454 203V211M455 202V212M456 202V212M457 203V211M458 183V231M459 179V235M460 179V235M461 179V235M462 202V212M463 202V212M464 179V235M465 179V235M466 202V212M467 203V211M468 190V224M469 179V235M470 192V222M471 179V235M472 187V227M473 201V213M474 204V210M475 202V212M476 202V212M477 203V211M478 179V235M479 179V235M480 179V235M481 179V235M482 179V235M483 179V235M484 179V235M485 186V228M486 188V226M487 201V213M488 198V216M489 183V231M490 197V217M491 192V222M492 202V212M493 199V215M494 204V210M495 202V212M496 204V210M497 204V210M498 198V216M499 179V235M500 189V225M501 188V226M502 189V225M503 180V234M504 179V235M505 179V235M506 183V231M507 185V229M508 179V235M509 183V231M510 179V235M511 184V230M512 179V235M513 191V223M514 179V235M515 194V220M516 205V209M517 202V212M518 179V235M519 179V235M520 203V211M521 179V235M522 179V235M523 179V235M524 179V235M525 179V235M526 179V235M527 179V235M528 179V235M529 188V226M530 179V235M531 202V212M532 201V213M533 204V210M534 199V215M535 192V222M536 187V227M537 195V219M538 187V227M539 189V225M540 179V235M541 184V230M542 195V219M543 199V215M544 199V215M545 204V210M546 204V210M547 202V212M548 203V211M549 203V211M550 204V210M551 202V212M552 204V210M553 204V210M554 179V235M555 183V231M556 179V235M557 179V235M558 179V235M559 179V235M560 202V212M561 202V212M562 205V209M563 204V210M564 198V216M565 199V215M566 202V212M567 199V215M568 199V215M569 201V213M570 197V217M571 198V216M572 201V213M573 204V210M574 205V209M575 203V211M576 201V213M577 199V215M578 201V213M579 195V219M580 199V215M581 198V216M582 200V214M583 202V212M584 201V213M585 201V213M586 201V213M587 202V212M588 203V211M589 198V216M590 195V219M591 193V221M592 193V221M593 186V228M594 193V221M595 192V222M596 198V216M597 201V213M598 202V212M599 201V213M600 201V213M601 200V214M602 198V216M603 202V212M604 202V212M605 200V214M606 201V213M607 202V212M608 199V215M609 202V212M610 203V211M611 201V213M612 201V213M613 201V213M614 202V212M615 200V214M616 201V213M617 203V211M618 205V209M619 204V210M620 201V213M621 201V213M622 200V214M623 201V213M624 199V215M625 201V213M626 197V217M627 203V211M628 205V209M629 203V211M630 204V210M631 203V211M632 203V211M633 198V216M634 202V212M635 202V212M636 198V216M637 198V216M638 202V212M639 201V213M640 199V215M641 199V215M642 202V212M643 202V212M644 202V212M645 202V212M646 202V212M647 197V217M648 193V221M649 194V220M650 199V215" stroke="#10883a" stroke-width="1" fill="none" transform="translate(.5 0)"/><path d="M173 206V208M174 201V213M175 194V220M176 199V215M177 195V219M178 197V217M179 202V212M180 202V212M181 201V213M182 203V211M183 203V211M184 204V210M185 205V209M186 204V210M187 206V208M188 205V209M189 205V209M190 205V209M191 205V209M192 206V208M193 206V208M194 206V208M195 205V209M196 205V209M197 206V208M198 206V208M199 206V208M200 206V208M201 206V208M202 206V208M203 205V209M204 205V209M205 206V208M206 206V208M207 206V208M208 206V208M209 206V208M210 202V212M211 200V214M212 196V218M213 199V215M214 197V217M215 199V215M216 202V212M217 206V208M218 206V208M219 202V212M220 199V215M221 194V220M222 194V220M223 198V216M224 195V219M225 202V212M226 206V208M227 204V210M228 203V211M229 203V211M230 201V213M231 202V212M232 203V211M233 204V210M234 199V215M235 202V212M236 206V208M237 206V208M238 206V208M239 206V208M240 206V208M241 206V208M242 206V208M243 206V208M244 206V208M245 206V208M246 195V219M247 188V226M248 194V220M249 206V208M250 206V208M251 206V208M252 205V209M253 205V209M254 206V208M255 206V208M256 206V208M257 205V209M258 206V208M259 206V208M260 206V208M261 203V211M262 199V215M263 200V214M264 199V215M265 199V215M266 198V216M267 200V214M268 199V215M269 203V211M270 206V208M271 206V208M272 200V214M273 195V219M274 196V218M275 200V214M276 202V212M277 202V212M278 202V212M279 204V210M280 204V210M281 205V209M282 205V209M283 206V208M284 206V208M285 206V208M286 206V208M287 202V212M288 202V212M289 198V216M290 198V216M291 200V214M292 200V214M293 204V210M294 206V208M295 206V208M296 206V208M297 206V208M298 206V208M299 205V209M300 206V208M301 206V208M302 205V209M303 205V209M304 206V208M305 206V208M306 204V210M307 201V213M308 201V213M309 196V218M310 199V215M311 198V216M312 200V214M313 200V214M314 200V214M315 203V211M316 206V208M317 206V208M318 206V208M319 206V208M320 206V208M321 206V208M322 205V209M323 204V210M324 204V210M325 203V211M326 203V211M327 205V209M328 206V208M329 206V208M330 206V208M331 206V208M332 206V208M333 206V208M334 204V210M335 204V210M336 202V212M337 203V211M338 202V212M339 204V210M340 205V209M341 206V208M342 206V208M343 206V208M344 206V208M345 206V208M346 206V208M347 205V209M348 205V209M349 204V210M350 206V208M351 206V208M352 206V208M353 206V208M354 206V208M355 206V208M356 205V209M357 204V210M358 206V208M359 206V208M360 206V208M361 201V213M362 202V212M363 203V211M364 206V208M365 206V208M366 206V208M367 206V208M368 206V208M369 206V208M370 206V208M371 206V208M372 204V210M373 202V212M374 203V211M375 204V210M376 205V209M377 205V209M378 206V208M379 206V208M380 206V208M381 206V208M382 206V208M383 206V208M384 206V208M385 206V208M386 205V209M387 205V209M388 206V208M389 206V208M390 206V208M391 206V208M392 204V210M393 201V213M394 199V215M395 196V218M396 201V213M397 198V216M398 200V214M399 202V212M400 206V208M401 206V208M402 206V208M403 206V208M404 206V208M405 206V208M406 206V208M407 206V208M408 206V208M409 206V208M410 206V208M411 206V208M412 206V208M413 206V208M414 199V215M415 199V215M416 197V217M417 201V213M418 206V208M419 204V210M420 201V213M421 200V214M422 195V219M423 192V222M424 202V212M425 206V208M426 206V208M427 201V213M428 198V216M429 199V215M430 197V217M431 200V214M432 201V213M433 202V212M434 206V208M435 206V208M436 206V208M437 206V208M438 206V208M439 206V208M440 206V208M441 205V209M442 204V210M443 205V209M444 206V208M445 206V208M446 206V208M447 206V208M448 205V209M449 204V210M450 204V210M451 205V209M452 205V209M453 206V208M454 206V208M455 206V208M456 206V208M457 206V208M458 200V214M459 196V218M460 197V217M461 198V216M462 206V208M463 206V208M464 198V216M465 201V213M466 206V208M467 206V208M468 203V211M469 202V212M470 201V213M471 202V212M472 204V210M473 206V208M474 206V208M475 206V208M476 206V208M477 206V208M478 202V212M479 201V213M480 195V219M481 195V219M482 194V220M483 196V218M484 199V215M485 202V212M486 203V211M487 206V208M488 204V210M489 200V214M490 203V211M491 204V210M492 204V210M493 205V209M494 205V209M495 206V208M496 206V208M497 206V208M498 204V210M499 200V214M500 202V212M501 201V213M502 202V212M503 199V215M504 202V212M505 202V212M506 201V213M507 201V213M508 201V213M509 199V215M510 200V214M511 200V214M512 199V215M513 200V214M514 199V215M515 203V211M516 206V208M517 206V208M518 193V221M519 197V217M520 201V213M521 200V214M522 201V213M523 199V215M524 201V213M525 204V210M526 203V211M527 205V209M528 205V209M529 206V208M530 205V209M531 206V208M532 206V208M533 206V208M534 205V209M535 204V210M536 203V211M537 203V211M538 204V210M539 202V212M540 203V211M541 204V210M542 205V209M543 204V210M544 205V209M545 206V208M546 206V208M547 206V208M548 206V208M549 206V208M550 206V208M551 206V208M552 206V208M553 206V208M554 201V213M555 199V215M556 198V216M557 197V217M558 199V215M559 201V213M560 206V208M561 206V208M562 206V208M563 206V208M564 205V209M565 205V209M566 205V209M567 205V209M568 205V209M569 205V209M570 204V210M571 205V209M572 206V208M573 206V208M574 206V208M575 206V208M576 205V209M577 205V209M578 204V210M579 204V210M580 204V210M581 205V209M582 204V210M583 205V209M584 206V208M585 206V208M586 206V208M587 206V208M588 206V208M589 205V209M590 205V209M591 203V211M592 204V210M593 203V211M594 203V211M595 204V210M596 205V209M597 206V208M598 206V208M599 206V208M600 206V208M601 205V209M602 204V210M603 205V209M604 205V209M605 206V208M606 206V208M607 205V209M608 205V209M609 205V209M610 205V209M611 205V209M612 205V209M613 205V209M614 205V209M615 204V210M616 205V209M617 206V208M618 206V208M619 206V208M620 206V208M621 205V209M622 205V209M623 205V209M624 204V210M625 205V209M626 205V209M627 206V208M628 206V208M629 206V208M630 206V208M631 206V208M632 205V209M633 205V209M634 205V209M635 204V210M636 205V209M637 205V209M638 205V209M639 205V209M640 205V209M641 205V209M642 205V209M643 205V209M644 206V208M645 206V208M646 206V208M647 205V209M648 204V210M649 205V209M650 205V209" stroke="#e6e6e6" stroke-width="1" fill="none" transform="translate(.5 0)"/><rect x="173" y="206" width="478" height="2" fill="#e6e6e6"/><rect x="651" y="206" width="99" height="2" fill="#14c83c"/><path d="M651 202V212M652 200V214M653 198V216M654 200V214M655 203V211M656 207V207M657 198V216M658 179V235M659 179V235M660 179V235M661 179V235M662 184V230M663 197V217M664 206V208M665 206V208M666 205V209M667 206V208M668 196V218M669 186V228M670 180V234M671 179V235M672 179V235M673 188V226M674 193V221M675 206V208M676 206V208M677 204V210M678 201V213M679 202V212M680 201V213M681 201V213M682 203V211M683 203V211M684 205V209M685 206V208M686 206V208M687 200V214M688 194V220M689 197V217M690 192V222M691 194V220M692 195V219M693 196V218M694 197V217M695 202V212M696 205V209M697 205V209M698 203V211M699 203V211M700 202V212M701 202V212M702 199V215M703 196V218M704 195V219M705 190V224M706 194V220M707 194V220M708 195V219M709 194V220M710 198V216M711 205V209M712 205V209M713 204V210M714 202V212M715 201V213M716 203V211M717 203V211M718 203V211M719 204V210M720 201V213M721 201V213M722 202V212M723 203V211M724 203V211M725 200V214M726 200V214M727 199V215M728 199V215M729 199V215M730 202V212M731 205V209M732 204V210M733 202V212M734 203V211M735 203V211M736 205V209M737 206V208M738 206V208M739 206V208M740 206V208M741 193V221M742 186V228M743 179V235M744 179V235M745 179V235M746 184V230M747 194V220" stroke="#14c83c" stroke-width="1" fill="none" transform="translate(.5 0)"/><path d="M651 205V209M652 204V210M653 204V210M654 204V210M655 205V209M657 203V211M658 199V215M659 196V218M660 196V218M661 196V218M662 198V216M663 203V211M668 202V212M669 199V215M670 196V218M671 194V220M672 194V220M673 198V216M674 203V211M677 206V208M678 205V209M679 205V209M680 205V209M681 205V209M682 205V209M683 206V208M687 204V210M688 203V211M689 202V212M690 202V212M691 201V213M692 202V212M693 202V212M694 203V211M695 205V209M697 206V208M698 206V208M699 205V209M700 205V209M701 205V209M702 204V210M703 202V212M704 202V212M705 200V214M706 201V213M707 201V213M708 202V212M709 203V211M710 204V210M713 206V208M714 206V208M715 205V209M716 205V209M717 205V209M718 206V208M719 206V208M720 205V209M721 205V209M722 205V209M723 206V208M724 205V209M725 204V210M726 204V210M727 204V210M728 204V210M729 204V210M730 205V209M731 206V208M732 205V209M733 206V208M734 205V209M735 206V208M736 206V208M741 202V212M742 199V215M743 195V219M744 194V220M745 197V217M746 198V216M747 203V211" stroke="#12983a" stroke-width="1" fill="none" transform="translate(.5 0)"/><rect x="87" y="264" width="663" height="1" fill="#12983a"/><rect x="139" y="263" width="34" height="2" fill="#14c83c"/><rect x="524" y="263" width="100" height="2" fill="#10a838"/><path d="M173 262V266M174 259V269M175 259V269M176 258V270M177 259V269M178 258V270M179 259V269M180 259V269M181 257V271M182 259V269M183 259V269M184 258V270M185 259V269M186 259V269M187 260V268M188 259V269M189 258V270M190 258V270M191 258V270M192 259V269M193 260V268M194 259V269M195 257V271M196 258V270M197 258V270M198 259V269M199 260V268M200 259V269M201 258V270M202 258V270M203 259V269M204 258V270M205 255V273M206 254V274M207 255V273M208 258V270M209 259V269M210 262V266M263 260V268M264 256V272M265 254V274M266 243V285M267 246V282M268 243V285M269 248V280M270 252V276M271 257V271M272 256V272M273 255V273M274 255V273M275 250V278M276 244V284M277 239V289M278 244V284M279 245V283M280 257V271M281 254V274M282 254V274M283 254V274M284 256V272M285 256V272M286 254V274M287 256V272M288 256V272M289 254V274M290 256V272M291 257V271M292 257V271M293 255V273M294 257V271M295 254V274M296 256V272M297 257V271M298 257V271M299 259V269M300 263V265M301 260V268M302 260V268M303 258V270M304 258V270M305 260V268M306 259V269M307 260V268M308 260V268M309 258V270M310 260V268M311 258V270M312 259V269M313 258V270M314 258V270M315 260V268M316 258V270M317 259V269M318 259V269M319 260V268M320 258V270M321 259V269M322 258V270M323 258V270M324 258V270M325 258V270M326 260V268M327 259V269M328 260V268M329 261V267M330 263V265M345 262V266M346 261V267M347 260V268M348 260V268M349 259V269M350 259V269M351 260V268M352 260V268M353 261V267M354 261V267M355 261V267M356 262V266M357 263V265M358 262V266M359 261V267M360 261V267M361 262V266M362 261V267M363 262V266M364 261V267M365 262V266M366 261V267M367 260V268M368 260V268M369 258V270M370 259V269M371 258V270M372 259V269M373 258V270M374 260V268M375 259V269M376 261V267M377 262V266M378 262V266M379 262V266M380 261V267M381 259V269M382 258V270M383 261V267M384 258V270M385 258V270M386 258V270M387 260V268M388 258V270M389 259V269M390 260V268M391 259V269M392 260V268M393 260V268M394 258V270M395 260V268M396 260V268M397 258V270M398 259V269M399 258V270M400 259V269M401 258V270M402 260V268M403 259V269M404 260V268M405 259V269M406 259V269M407 258V270M408 258V270M409 260V268M410 259V269M411 260V268M412 260V268M413 260V268M414 259V269M415 259V269M416 258V270M417 258V270M418 260V268M419 260V268M420 260V268M421 258V270M422 260V268M423 260V268M424 260V268M425 258V270M426 261V267M427 259V269M428 259V269M429 259V269M430 260V268M431 259V269M432 258V270M433 260V268M434 260V268M435 261V267M436 262V266M437 263V265M452 263V265M453 262V266M454 261V267M455 261V267M456 260V268M457 260V268M458 259V269M459 260V268M460 259V269M461 257V271M462 259V269M463 257V271M464 257V271M465 259V269M466 257V271M467 259V269M468 259V269M469 258V270M470 257V271M471 258V270M472 258V270M473 260V268M474 259V269M475 261V267M476 260V268M477 261V267M478 261V267M479 260V268M480 260V268M481 260V268M482 258V270M483 259V269M484 259V269M485 257V271M486 258V270M487 259V269M488 257V271M489 258V270M490 257V271M491 258V270M492 257V271M493 258V270M494 260V268M495 259V269M496 259V269M497 261V267M498 261V267M499 261V267M500 260V268M501 259V269M502 258V270M503 258V270M504 258V270M505 258V270M506 258V270M507 258V270M508 259V269M509 260V268M510 258V270M511 258V270M512 257V271M513 259V269M514 260V268M515 260V268M516 260V268M517 259V269M518 259V269M519 258V270M520 259V269M521 259V269M522 260V268M523 261V267M532 263V265M536 263V265M545 263V265M547 263V265M550 263V265M579 263V265M613 263V265M645 263V265M646 262V266M647 261V267M648 261V267M649 262V266M650 262V266M651 263V265M656 263V265M657 263V265M658 262V266M659 261V267M660 262V266M661 260V268M662 260V268M663 261V267M664 261V267M665 261V267M666 262V266M667 263V265M679 262V266M680 261V267M681 261V267M682 260V268M683 259V269M684 260V268M685 260V268M686 260V268M687 260V268M688 262V266M689 263V265M699 254V274M700 253V275M701 253V275M702 255V273M703 259V269M704 261V267M705 262V266M706 262V266M707 256V272M708 255V273M709 256V272M710 256V272M711 260V268M712 261V267M713 262V266M714 263V265M715 263V265M716 263V265M717 263V265M719 254V274M720 252V276M721 253V275M722 254V274M723 259V269M724 260V268M725 262V266M726 262V266M727 263V265M728 255V273M729 252V276M730 254V274M731 255V273M732 259V269M733 261V267M734 262V266M735 262V266M736 263V265M737 255V273M738 252V276M739 254V274M740 255V273M741 259V269M742 260V268M743 261V267M744 262V266M745 255V273M746 253V275M747 255V273M748 255V273M749 259V269" stroke="#14c83c" stroke-width="1" fill="none" transform="translate(.5 0)"/><path d="M173 263V265M174 262V266M175 261V267M176 261V267M177 260V268M178 261V267M179 260V268M180 261V267M181 260V268M182 260V268M183 261V267M184 261V267M185 261V267M186 261V267M187 261V267M188 261V267M189 260V268M190 261V267M191 261V267M192 261V267M193 261V267M194 261V267M195 260V268M196 261V267M197 260V268M198 261V267M199 262V266M200 261V267M201 261V267M202 261V267M203 261V267M204 260V268M205 260V268M206 259V269M207 259V269M208 259V269M209 262V266M210 263V265M263 262V266M264 260V268M265 258V270M266 256V272M267 256V272M268 255V273M269 256V272M270 258V270M271 259V269M272 259V269M273 260V268M274 259V269M275 257V271M276 254V274M277 254V274M278 254V274M279 257V271M280 258V270M281 259V269M282 258V270M283 259V269M284 259V269M285 260V268M286 258V270M287 260V268M288 260V268M289 260V268M290 258V270M291 260V268M292 259V269M293 258V270M294 259V269M295 259V269M296 259V269M297 258V270M298 259V269M299 261V267M300 263V265M301 262V266M302 261V267M303 261V267M304 261V267M305 261V267M306 260V268M307 261V267M308 261V267M309 261V267M310 261V267M311 261V267M312 262V266M313 261V267M314 261V267M315 261V267M316 261V267M317 261V267M318 261V267M319 261V267M320 261V267M321 261V267M322 261V267M323 261V267M324 261V267M325 261V267M326 261V267M327 261V267M328 261V267M329 262V266M330 263V265M345 263V265M346 263V265M347 262V266M348 262V266M349 261V267M350 262V266M351 262V266M352 261V267M353 261V267M354 262V266M355 262V266M356 263V265M357 263V265M358 262V266M359 263V265M360 262V266M361 262V266M362 262V266M363 263V265M364 262V266M365 263V265M366 262V266M367 262V266M368 261V267M369 261V267M370 261V267M371 260V268M372 260V268M373 261V267M374 261V267M375 262V266M376 262V266M377 263V265M378 263V265M379 262V266M380 262V266M381 262V266M382 262V266M383 261V267M384 261V267M385 261V267M386 261V267M387 261V267M388 261V267M389 261V267M390 261V267M391 261V267M392 262V266M393 261V267M394 261V267M395 261V267M396 261V267M397 261V267M398 261V267M399 261V267M400 261V267M401 261V267M402 261V267M403 262V266M404 261V267M405 261V267M406 261V267M407 261V267M408 261V267M409 261V267M410 261V267M411 261V267M412 262V266M413 261V267M414 261V267M415 261V267M416 261V267M417 261V267M418 261V267M419 261V267M420 261V267M421 261V267M422 261V267M423 261V267M424 261V267M425 261V267M426 261V267M427 261V267M428 261V267M429 261V267M430 261V267M431 261V267M432 262V266M433 261V267M434 262V266M435 263V265M436 263V265M437 264V264M452 263V265M453 263V265M454 262V266M455 262V266M456 262V266M457 262V266M458 261V267M459 261V267M460 261V267M461 261V267M462 261V267M463 261V267M464 261V267M465 261V267M466 261V267M467 261V267M468 260V268M469 260V268M470 261V267M471 261V267M472 261V267M473 261V267M474 262V266M475 261V267M476 262V266M477 263V265M478 263V265M479 262V266M480 262V266M481 261V267M482 261V267M483 261V267M484 261V267M485 261V267M486 260V268M487 260V268M488 260V268M489 260V268M490 260V268M491 260V268M492 260V268M493 261V267M494 261V267M495 262V266M496 261V267M497 262V266M498 263V265M499 263V265M500 262V266M501 260V268M502 260V268M503 260V268M504 261V267M505 261V267M506 261V267M507 261V267M508 260V268M509 260V268M510 261V267M511 261V267M512 261V267M513 260V268M514 260V268M515 261V267M516 260V268M517 260V268M518 260V268M519 261V267M520 260V268M521 261V267M522 262V266M523 263V265M645 263V265M646 263V265M647 263V265M648 263V265M649 263V265M650 263V265M651 263V265M656 263V265M657 263V265M658 262V266M659 262V266M660 262V266M661 262V266M662 262V266M663 262V266M664 262V266M665 263V265M666 263V265M667 263V265M679 263V265M680 263V265M681 262V266M682 261V267M683 261V267M684 261V267M685 261V267M686 262V266M687 262V266M688 263V265M689 263V265M699 261V267M700 259V269M701 259V269M702 259V269M703 261V267M704 262V266M705 263V265M706 263V265M707 261V267M708 260V268M709 260V268M710 260V268M711 262V266M712 262V266M713 263V265M714 263V265M719 260V268M720 259V269M721 259V269M722 259V269M723 261V267M724 262V266M725 263V265M726 263V265M728 261V267M729 259V269M730 258V270M731 259V269M732 261V267M733 262V266M734 263V265M735 263V265M737 260V268M738 259V269M739 258V270M740 259V269M741 261V267M742 262V266M743 263V265M744 263V265M745 261V267M746 259V269M747 259V269M748 259V269M749 261V267" stroke="#12983a" stroke-width="1" fill="none" transform="translate(.5 0)"/><path d="M102 65v228M124 65v228M146 65v228M168 65v228M190 65v228M212 65v228M234 65v228M256 65v228M278 65v228M300 65v228M322 65v228M344 65v228M366 65v228M388 65v228M410 65v228M432 65v228M455 65v228M477 65v228M499 65v228M521 65v228M543 65v228M565 65v228M587 65v228M609 65v228M631 65v228M653 65v228M675 65v228M697 65v228M719 65v228M741 65v228M87 122h663M87 179h663M87 236h663" stroke="#444" stroke-width="1" fill="none" transform="translate(.5 -.5)"/><rect x="173" y="65" width="1" height="228" fill="#ffff00"/><rect x="650" y="65" width="1" height="228" fill="#ffff00"/></svg>
<svg style="left:0;top:65px" width="752" height="228" viewBox="0 65 752 228">
<path d="M87 188.500H90.500M93.500 188V193.500M91 192.500H94M90 196H94" stroke="#84f0ff" stroke-width="1.8" fill="none"/>
<path d="M99 193.200L652 232.500" stroke="#84f0ff" stroke-width="2" fill="none" stroke-dasharray="4 4"/>
<path d="M651 229.500H656M655.500 229V234M650 234.500H655" stroke="#84f0ff" stroke-width="1.6" fill="none"/>
<path d="M167 215.700H171" stroke="#50c8e0" stroke-width="1.8" fill="none"/><path d="M166.500 220V224M171.500 223V225.500" stroke="#3090a8" stroke-width="1.6" fill="none"/>
<path d="M213 165h1v12h-1zM214 176h10v1h-10zM212 166h1v1h-1zM212 168h1v1h-1zM212 170h1v1h-1zM212 172h1v1h-1zM212 174h1v1h-1zM212 176h1v1h-1zM214 177h1v1h-1zM216 177h1v1h-1zM218 177h1v1h-1zM220 177h1v1h-1zM222 177h1v1h-1zM215 169h1v1h-1zM217 171h1v1h-1zM219 173h1v1h-1zM221 175h1v1h-1z" fill="#f00000" shape-rendering="crispEdges"/>
<path d="M263 279h1v12h-1zM264 290h10v1h-10zM262 280h1v1h-1zM262 282h1v1h-1zM262 284h1v1h-1zM262 286h1v1h-1zM262 288h1v1h-1zM262 290h1v1h-1zM264 291h1v1h-1zM266 291h1v1h-1zM268 291h1v1h-1zM270 291h1v1h-1zM272 291h1v1h-1zM265 283h1v1h-1zM267 285h1v1h-1zM269 287h1v1h-1zM271 289h1v1h-1z" fill="#f00000" shape-rendering="crispEdges"/>
<path d="M525 279h1v12h-1zM526 290h10v1h-10zM524 280h1v1h-1zM524 282h1v1h-1zM524 284h1v1h-1zM524 286h1v1h-1zM524 288h1v1h-1zM524 290h1v1h-1zM526 291h1v1h-1zM528 291h1v1h-1zM530 291h1v1h-1zM532 291h1v1h-1zM534 291h1v1h-1zM527 283h1v1h-1zM529 285h1v1h-1zM531 287h1v1h-1zM533 289h1v1h-1z" fill="#f00000" shape-rendering="crispEdges"/>
</svg>
<span class="lbl" style="left:214.400px;top:168px;letter-spacing:.1px">label1</span>
<span class="lbl" style="left:264.400px;top:282px;letter-spacing:.12px">bump start</span>
<span class="lbl" style="left:526.400px;top:282px;letter-spacing:.12px">bump end</span>
<div style="left:87px;top:292px;width:663px;height:1px;background:#e8e8e8"></div>
<svg style="left:87px;top:293px" width="663" height="49" viewBox="87 293 663 49"><defs>
<filter id="nz" x="0" y="0" width="100%" height="100%" color-interpolation-filters="sRGB">
<feTurbulence type="fractalNoise" baseFrequency="0.12 0.15" numOctaves="4" seed="11" stitchTiles="stitch" result="t"/>
<feColorMatrix type="matrix" values="1.25 0 0 0 -0.15  1.25 0 0 0 -0.15  1.25 0 0 0 -0.15  0 0 0 0 1"/>
</filter>
<filter id="bl" x="-10%" y="-10%" width="120%" height="120%"><feGaussianBlur stdDeviation="0.9"/></filter>
<filter id="bl2" x="-10%" y="-10%" width="120%" height="120%"><feGaussianBlur stdDeviation="2.2"/></filter>
<pattern id="ng" patternUnits="userSpaceOnUse" x="148" y="293" width="120" height="49">
<rect x="0" y="0" width="120" height="49" filter="url(#nz)"/>
</pattern>
<pattern id="tp" patternUnits="userSpaceOnUse" x="148" y="293" width="120" height="49">
<rect x="0" y="0" width="120" height="49" fill="#4b4b4b"/>
<g filter="url(#bl2)">
<path d="M22 -4L90 -4L62 22L42 30L26 20Z" fill="#101010"/>
<ellipse cx="80" cy="19" rx="12" ry="5" fill="#181818" transform="rotate(-38 80 19)"/>
<ellipse cx="128" cy="36" rx="9" ry="8" fill="#2c2c2c"/>
<ellipse cx="8" cy="36" rx="9" ry="8" fill="#2c2c2c"/>
<ellipse cx="95" cy="40" rx="16" ry="7" fill="#6a6a6a"/>
<ellipse cx="64" cy="41" rx="12" ry="5" fill="#666"/>
<ellipse cx="18" cy="12" rx="9" ry="8" fill="#626262"/>
<ellipse cx="108" cy="12" rx="10" ry="6" fill="#5e5e5e"/>
<ellipse cx="42" cy="40" rx="9" ry="5" fill="#2a2a2a"/>
</g>
<g filter="url(#bl)">
<path d="M36 -2L52 26M44 -2L58 22M52 -2L64 17M60 -2L70 13M68 -2L76 9M76 -2L81 5" stroke="#787878" stroke-width="3.2" fill="none"/>
<path d="M90.500 -1L80 7L66 19L53 30" stroke="#b8b8b8" stroke-width="4.6" fill="none" stroke-linecap="round"/>
<path d="M88 3L70 18" stroke="#d8d8d8" stroke-width="1.8" fill="none"/>
<path d="M31 18Q35 27 47 31" stroke="#c0c0c0" stroke-width="2.8" fill="none" stroke-linecap="round"/>
</g>
</pattern></defs><rect x="87" y="293" width="663" height="49" fill="url(#tp)"/><rect x="87" y="293" width="663" height="49" fill="url(#ng)" style="mix-blend-mode:overlay"/></svg>
<svg style="left:10px;top:69px" width="12" height="13" viewBox="0 0 12 13" shape-rendering="crispEdges"><path d="M0 0H7V9H12V13H7V9H6V13H0Z" fill="#606060"/><rect x="4" y="1" width="2" height="2" fill="#d6d3de"/><rect x="4" y="9" width="2" height="3" fill="#d6d3de"/><rect x="4" y="9" width="2" height="2" fill="#606060"/></svg>
<svg style="left:10px;top:85px" width="11" height="14" viewBox="0 0 11 14"><rect x="0" y="4.5" width="3" height="5" fill="#606060"/><path d="M4 4.5L10.5 0V14L4 9.5Z" fill="#606060"/></svg>
<span class="num" style="top:70px">1</span>
<span class="num" style="top:80px">2</span>
<span class="num" style="top:90px">3</span>
<span class="num" style="top:100px">4</span>
<div style="left:35px;top:69px;width:40px;height:9px;overflow:hidden"><div style="left:0;top:0;width:40px;height:9px;background:linear-gradient(90deg,#00f000 0,#30ff00 25%,#a0ff00 45%,#ffff00 60%,#ff9000 80%,#ff1000 100%)"></div></div>
<svg style="left:10px;top:126px" width="12" height="13" viewBox="0 0 12 13" shape-rendering="crispEdges"><path d="M0 0H7V9H12V13H7V9H6V13H0Z" fill="#606060"/><rect x="4" y="1" width="2" height="2" fill="#d6d3de"/><rect x="4" y="9" width="2" height="3" fill="#d6d3de"/><rect x="4" y="9" width="2" height="2" fill="#606060"/></svg>
<svg style="left:10px;top:142px" width="11" height="14" viewBox="0 0 11 14"><rect x="0" y="4.5" width="3" height="5" fill="#606060"/><path d="M4 4.5L10.5 0V14L4 9.5Z" fill="#606060"/></svg>
<span class="num" style="top:127px">1</span>
<span class="num" style="top:137px">2</span>
<span class="num" style="top:147px">3</span>
<span class="num" style="top:157px">4</span>
<div style="left:35px;top:136px;width:40px;height:9px;overflow:hidden"><div style="left:0;top:0;width:40px;height:9px;background:linear-gradient(90deg,#00f000 0,#30ff00 25%,#a0ff00 45%,#ffff00 60%,#ff9000 80%,#ff1000 100%)"></div></div>
<svg style="left:10px;top:183px" width="12" height="13" viewBox="0 0 12 13" shape-rendering="crispEdges"><path d="M0 0H7V9H12V13H7V9H6V13H0Z" fill="#606060"/><rect x="4" y="1" width="2" height="2" fill="#d6d3de"/><rect x="4" y="9" width="2" height="3" fill="#d6d3de"/><rect x="4" y="9" width="2" height="2" fill="#606060"/></svg>
<svg style="left:10px;top:199px" width="11" height="14" viewBox="0 0 11 14"><rect x="0" y="4.5" width="3" height="5" fill="#606060"/><path d="M4 4.5L10.5 0V14L4 9.5Z" fill="#606060"/></svg>
<span class="num" style="top:184px">1</span>
<span class="num" style="top:194px">2</span>
<span class="num" style="top:204px">3</span>
<span class="num" style="top:214px">4</span>
<div style="left:35px;top:203px;width:12px;height:9px;overflow:hidden"><div style="left:0;top:0;width:40px;height:9px;background:linear-gradient(90deg,#00f000 0,#30ff00 25%,#a0ff00 45%,#ffff00 60%,#ff9000 80%,#ff1000 100%)"></div></div>
<div style="left:35px;top:213px;width:15px;height:9px;overflow:hidden"><div style="left:0;top:0;width:40px;height:9px;background:linear-gradient(90deg,#00f000 0,#30ff00 25%,#a0ff00 45%,#ffff00 60%,#ff9000 80%,#ff1000 100%)"></div></div>
<svg style="left:10px;top:240px" width="12" height="13" viewBox="0 0 12 13" shape-rendering="crispEdges"><path d="M0 0H7V9H12V13H7V9H6V13H0Z" fill="#4464d8"/><rect x="4" y="1" width="2" height="2" fill="#d6d3de"/><rect x="4" y="9" width="2" height="3" fill="#d6d3de"/><rect x="4" y="9" width="2" height="2" fill="#4464d8"/></svg>
<svg style="left:10px;top:256px" width="11" height="14" viewBox="0 0 11 14"><rect x="0" y="4.5" width="3" height="5" fill="#606060"/><path d="M4 4.5L10.5 0V14L4 9.5Z" fill="#606060"/></svg>
<span class="num" style="top:241px">1</span>
<span class="num" style="top:251px">2</span>
<span class="num" style="top:261px">3</span>
<span class="num" style="top:271px">4</span>
<div style="left:35px;top:260px;width:24px;height:9px;overflow:hidden"><div style="left:0;top:0;width:40px;height:9px;background:linear-gradient(90deg,#00f000 0,#30ff00 25%,#a0ff00 45%,#ffff00 60%,#ff9000 80%,#ff1000 100%)"></div></div>
<div style="left:35px;top:270px;width:20px;height:9px;overflow:hidden"><div style="left:0;top:0;width:40px;height:9px;background:linear-gradient(90deg,#00f000 0,#30ff00 25%,#a0ff00 45%,#ffff00 60%,#ff9000 80%,#ff1000 100%)"></div></div>
<div style="left:87px;top:342px;width:663px;height:15px;background:#c6c3d1;border-left:1px solid #9896b2;border-bottom:1px solid #fff"></div>
<div class="btn" style="left:89px;top:344px;width:11px;height:11px"></div>
<svg style="left:89px;top:344px" width="11" height="11"><path d="M2 9L9 2" stroke="#8886a4" stroke-width="1"/></svg>
<div class="btn" style="left:738px;top:344px;width:11px;height:11px"></div>
<svg style="left:738px;top:344px" width="11" height="11"><path d="M2 9L9 2" stroke="#8886a4" stroke-width="1"/></svg>
<svg style="left:104px;top:343.500px" width="84" height="13" viewBox="0 0 84 13"><path d="M3.5 10.5V6L8.5 1.5H79.5L74 10.5Z" fill="#d6d3de"/><path d="M3.5 10.5V6L8.5 1.5H79.5" stroke="#fff" fill="none"/><path d="M79.5 1.5L74 10.5H3.5" stroke="#8886a4" fill="none"/><path d="M36 9L41 3M40 9L45 3" stroke="#8886a4" fill="none"/><path d="M37 9L42 3M41 9L46 3" stroke="#fff" fill="none"/></svg>
<div class="btn on" style="left:11px;top:367px;width:30px;height:30px"></div>
<div class="btn" style="left:41px;top:367px;width:30px;height:30px"></div>
<div class="btn" style="left:11px;top:398px;width:30px;height:30px"></div>
<div class="btn" style="left:41px;top:398px;width:30px;height:30px"></div>
<div class="btn" style="left:11px;top:429px;width:30px;height:30px"></div>
<svg style="left:17px;top:370px" width="14" height="22" viewBox="0 0 14 22"><defs><linearGradient id="ag1" x1="0" x2="1"><stop offset="0" stop-color="#777"/><stop offset=".5" stop-color="#d8d8d8"/><stop offset="1" stop-color="#888"/></linearGradient></defs><path d="M1 1V16L4.5 12.5L8 20.5L10.8 19.3L7.5 11.5H12Z" fill="url(#ag1)" stroke="#303030" stroke-width="1.1" stroke-linejoin="round"/></svg>
<svg style="left:43.5px;top:369.5px" width="14" height="22" viewBox="0 0 14 22"><defs><linearGradient id="ag2" x1="0" x2="1"><stop offset="0" stop-color="#777"/><stop offset=".5" stop-color="#d8d8d8"/><stop offset="1" stop-color="#888"/></linearGradient></defs><path d="M1 1V16L4.5 12.5L8 20.5L10.8 19.3L7.5 11.5H12Z" fill="url(#ag2)" stroke="#303030" stroke-width="1.1" stroke-linejoin="round"/></svg>
<div style="left:58px;top:385px;width:9px;height:9px;border:1px solid #000;background:#e8e8e8"></div><div style="left:60px;top:389px;width:5px;height:1px;background:#000"></div><div style="left:62px;top:387px;width:1px;height:5px;background:#000"></div>
<svg style="left:12px;top:400px" width="28" height="28" viewBox="12 400 28 28"><defs><linearGradient id="pg" gradientUnits="userSpaceOnUse" x1="20" y1="411" x2="25" y2="413.500"><stop offset="0" stop-color="#2a2a2a"/><stop offset=".35" stop-color="#9a9a9a"/><stop offset=".6" stop-color="#3a3a3a"/><stop offset="1" stop-color="#0a0a0a"/></linearGradient></defs><path d="M16.500 424.500L36.500 413.500L37.500 417L20 425.500Z" fill="#aaa8b6"/><path d="M15.500 425L16.300 420L22 404.500Q24.500 402.500 27 405.500L20.300 422.300Z" fill="url(#pg)"/><path d="M15.500 425L16.300 420.200L20 422.200Z" fill="#f0f0f0"/><path d="M15.500 425L15.900 423L17.200 424Z" fill="#222"/></svg>
<svg style="left:43px;top:401px" width="24" height="24" viewBox="43 401 24 24"><path d="M44 412.500H65.500M54.500 402V423" stroke="#1c1c1c" stroke-width="3" fill="none"/><path d="M45 412.500H64.500M54.500 403V422" stroke="#b4b4b4" stroke-width="1" fill="none"/></svg>
<svg style="left:13px;top:431px" width="26" height="26" viewBox="-13 -13 26 26"><defs><linearGradient id="mg" x1="0" y1="0" x2="1" y2="1"><stop offset="0" stop-color="#c8c8c8"/><stop offset=".5" stop-color="#8a8a8a"/><stop offset="1" stop-color="#505050"/></linearGradient></defs><path d="M0 -11.500L4.800 -6.800H2V-2H6.800V-4.800L11.500 0L6.800 4.800V2H2V6.800H4.800L0 11.500L-4.800 6.800H-2V2H-6.800V4.800L-11.500 0L-6.800 -4.800V-2H-2V-6.800H-4.800Z" fill="url(#mg)" stroke="#303030" stroke-width="1" stroke-linejoin="round" transform="translate(-0.700 -0.300)"/></svg>
<div class="etch" style="left:87px;top:367px;width:230px;height:68px"></div>
<span class="t" style="left:134.6px;top:370px;width:20px;text-align:center;font-family:'DejaVu Sans',sans-serif;font-weight:bold;font-size:21.5px;line-height:24px;height:24px;transform:scaleX(1.14);-webkit-text-stroke:0.4px #000">0</span>
<span class="t" style="left:150.9px;top:370px;width:20px;text-align:center;font-family:'DejaVu Sans',sans-serif;font-weight:bold;font-size:21.5px;line-height:24px;height:24px;transform:scaleX(1.14);-webkit-text-stroke:0.4px #000">0</span>
<span class="t" style="left:167.3px;top:370px;width:20px;text-align:center;font-family:'DejaVu Sans',sans-serif;font-weight:bold;font-size:21.5px;line-height:24px;height:24px;transform:scaleX(1.14);-webkit-text-stroke:0.4px #000">:</span>
<span class="t" style="left:183.7px;top:370px;width:20px;text-align:center;font-family:'DejaVu Sans',sans-serif;font-weight:bold;font-size:21.5px;line-height:24px;height:24px;transform:scaleX(1.14);-webkit-text-stroke:0.4px #000">1</span>
<span class="t" style="left:200.0px;top:370px;width:20px;text-align:center;font-family:'DejaVu Sans',sans-serif;font-weight:bold;font-size:21.5px;line-height:24px;height:24px;transform:scaleX(1.14);-webkit-text-stroke:0.4px #000">7</span>
<span class="t" style="left:216.3px;top:370px;width:20px;text-align:center;font-family:'DejaVu Sans',sans-serif;font-weight:bold;font-size:21.5px;line-height:24px;height:24px;transform:scaleX(1.14);-webkit-text-stroke:0.4px #000">.</span>
<span class="t" style="left:232.7px;top:370px;width:20px;text-align:center;font-family:'DejaVu Sans',sans-serif;font-weight:bold;font-size:21.5px;line-height:24px;height:24px;transform:scaleX(1.14);-webkit-text-stroke:0.4px #000">3</span>
<span class="t" style="left:249.1px;top:370px;width:20px;text-align:center;font-family:'DejaVu Sans',sans-serif;font-weight:bold;font-size:21.5px;line-height:24px;height:24px;transform:scaleX(1.14);-webkit-text-stroke:0.4px #000">6</span>
<span class="b" style="left:153px;top:394px;font-size:10.65px">00:06.21 ... 00:27.88</span>
<span class="b" style="left:153px;top:404px;font-size:10.65px">00:06.21 ... 00:27.88</span>
<span class="t" style="left:285px;top:374px;width:30px;text-align:center;font-family:'DejaVu Sans',sans-serif;font-weight:bold;font-size:7.5px;line-height:8px;color:#b4b4ac">PLAY</span>
<span class="t" style="left:285px;top:386px;width:30px;text-align:center;font-family:'DejaVu Sans',sans-serif;font-weight:bold;font-size:7.5px;line-height:8px;color:#b4b4ac">REC</span>
<span class="t" style="left:285px;top:398px;width:30px;text-align:center;font-family:'DejaVu Sans',sans-serif;font-weight:bold;font-size:7.5px;line-height:8px;color:#000">LOOP</span>
<span class="t" style="left:285px;top:410px;width:30px;text-align:center;font-family:'DejaVu Sans',sans-serif;font-weight:bold;font-size:7.5px;line-height:8px;color:#000">RPLC</span>
<div class="etch" style="left:87px;top:451px;width:230px;height:34px"></div>
<svg style="left:110px;top:456px" width="190" height="24" viewBox="110 456 190 24">
<defs><radialGradient id="rg" cx=".38" cy=".32" r=".7"><stop offset="0" stop-color="#e05040"/><stop offset=".45" stop-color="#b01810"/><stop offset="1" stop-color="#600000"/></radialGradient>
<linearGradient id="tg" x1="0" x2="1"><stop offset="0" stop-color="#bbb"/><stop offset="1" stop-color="#e8e8e8"/></linearGradient></defs>
<g fill="url(#tg)" stroke="#303030" stroke-width="1">
<path d="M125.5 460.5V474.5L117.5 467.5ZM134.5 460.5V474.5L126.5 467.5Z"/>
<path d="M148.5 460.5V474.5L156.5 467.5ZM157.5 460.5V474.5L165.5 467.5Z"/>
<rect x="180.500" y="461.500" width="12" height="12"/>
<path d="M244.500 460.500V474.500L252.500 467.500Z"/>
<path d="M271.500 460.500V474.500L279.500 467.500Z"/><rect x="280.500" y="460.500" width="3" height="14"/>
</g>
<circle cx="216.500" cy="467.300" r="8" fill="url(#rg)" stroke="#400000" stroke-width="1"/>
</svg>
<div style="left:333px;top:393px;width:408px;height:92px;border:1px solid;border-color:#fff #9896b2 #9896b2 #fff"></div>
<div style="left:333px;top:367px;width:32px;height:27px;border:1px solid;border-color:#fff #9896b2 transparent #fff;background:#d6d3de"></div>
<div style="left:365px;top:369px;width:33px;height:24px;border:1px solid;border-color:#fff #9896b2 transparent transparent;border-left-width:0;background:#c7c4d2"></div>
<span class="t" style="left:339.5px;top:375px;font-size:12px;line-height:12px">Info</span>
<span class="t" style="left:369.5px;top:376px;font-size:12px;line-height:12px">Grid</span>
<span class="b" style="left:342.5px;top:406px;font-size:10.6px;letter-spacing:0px">File size:</span>
<span class="b" style="left:437.5px;top:406px;font-size:10.6px">181.75 MB</span>
<span class="b" style="left:342.5px;top:420px;font-size:10.6px;letter-spacing:0px">File format:</span>
<span class="b" style="left:437.5px;top:420px;font-size:10.6px">FLAC (via FLAC)</span>
<span class="b" style="left:342.5px;top:434px;font-size:10.6px;letter-spacing:-0.07px">Sample format:</span>
<span class="b" style="left:437.5px;top:434px;font-size:10.6px">32 bit int</span>
<span class="b" style="left:342.5px;top:448px;font-size:10.6px;letter-spacing:-0.17px">Sample frequency:</span>
<span class="b" style="left:437.5px;top:448px;font-size:10.6px">48000 HZ</span>
<div class="in" style="left:1px;top:495px;width:546px;height:22px;border-left-color:transparent"></div>
<span class="t" style="left:3.4px;top:499px;font-size:12px;line-height:12px;letter-spacing:0px">GNUsound</span>
<span class="t" style="left:70.6px;top:499px;font-size:12px;line-height:12px;letter-spacing:0.35px">248.15</span>
<span class="t" style="left:114px;top:499px;font-size:12px;line-height:12px;letter-spacing:0.2px">sec.</span>
<span class="t" style="left:144.4px;top:499px;font-size:12px;line-height:12px;letter-spacing:0.5px">11911296</span>
<span class="t" style="left:204px;top:499px;font-size:12px;line-height:12px;letter-spacing:0px">frames</span>
<span class="t" style="left:249px;top:499px;font-size:12px;line-height:12px;letter-spacing:0px">zoom</span>
<span class="t" style="left:280.4px;top:499px;font-size:12px;line-height:12px;letter-spacing:0.3px">1:2176</span>
<div class="in" style="left:551px;top:495px;width:150px;height:22px"></div>
<div class="btn" style="left:705px;top:495px;width:45px;height:22px"></div>
<span class="t" style="left:708.5px;top:500px;font-size:12px;line-height:12px;color:#8e8ca0;text-shadow:1px 1px 0 #fff">Cancel</span>
<div style="left:0;top:517px;width:752px;height:7px;background:#000"></div>
<div style="left:1px;top:518px;width:749px;height:5px;background:linear-gradient(#8a8a86,#6c6c68)"></div>
<div style="left:1px;top:518px;width:14px;height:5px;background:#d2cfc0;border-top:1px solid #fff;border-left:1px solid #fff"></div>
<div style="left:15px;top:518px;width:1px;height:5px;background:#000"></div><div style="left:16px;top:518px;width:2px;height:5px;background:#fff"></div>
<div style="left:736px;top:518px;width:14px;height:5px;background:#d2cfc0;border-top:1px solid #fff;border-left:1px solid #fff"></div>
<div style="left:735px;top:518px;width:1px;height:5px;background:#000"></div>
</body></html>
